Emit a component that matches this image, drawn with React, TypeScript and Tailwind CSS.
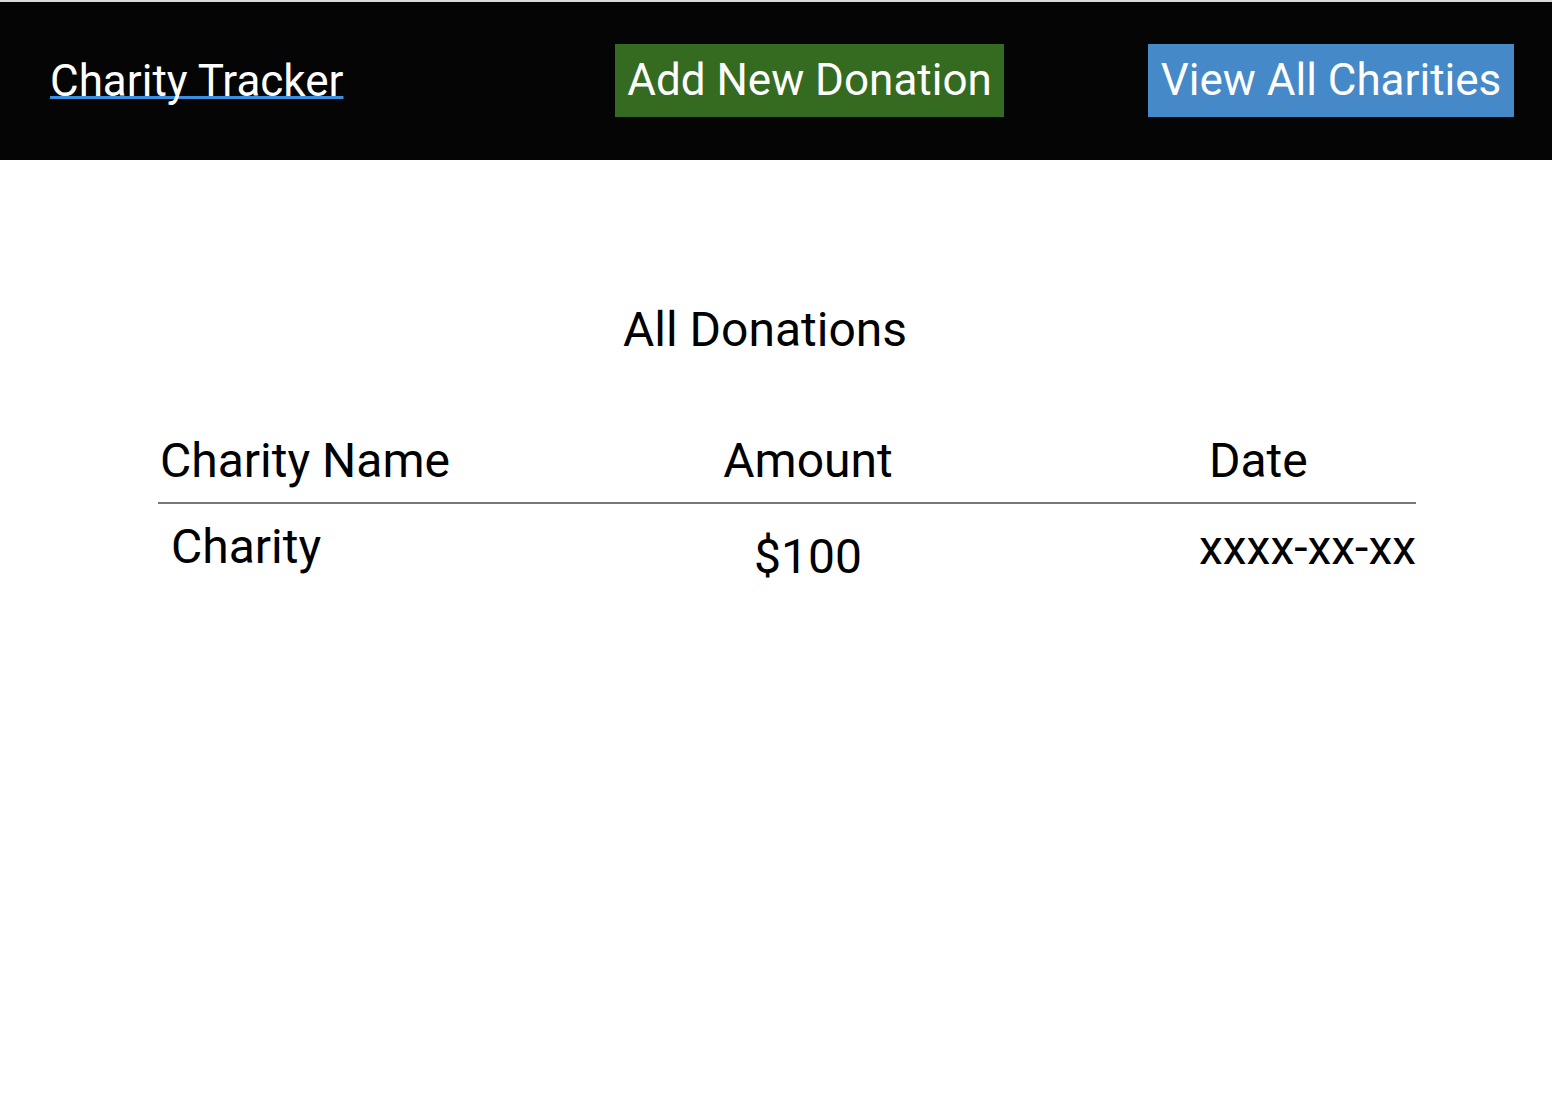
import React from "react";

export default function App() {
  return (
    <div className="min-h-[1110px] w-[1552px] bg-white font-['Roboto',sans-serif] text-black">
      <header className="flex h-[160px] items-center border-t-2 border-[#dadada] bg-[#050505] pl-[50px]">
        <div className="w-[565px]">
          <a
            href="#"
            className="text-[44px] leading-[50px] text-white underline decoration-[#3b8ee0] decoration-3 underline-offset-[0px] [text-decoration-skip-ink:none]"
          >
            Charity Tracker
          </a>
        </div>
        <button className="mb-[2px] flex h-[73px] w-[389px] items-center justify-center bg-[#356a21] text-[44px] leading-[50px] text-white">
          Add New Donation
        </button>
        <button className="mb-[2px] ml-[144px] flex h-[73px] w-[366px] items-center justify-center bg-[#4589c8] text-[44px] leading-[50px] text-white">
          View All Charities
        </button>
      </header>

      <main className="pl-[158px]">
        <h1 className="mt-[142px] w-[1214px] text-center text-[48px] leading-[56px]">All Donations</h1>

        <div className="mt-[75px] w-[1258px]">
          <div className="grid grid-cols-[450px_400px_408px] border-b-2 border-[#777777] pb-[13px] text-[48px] leading-[56px]">
            <div className="pl-[2px]">Charity Name</div>
            <div className="text-center">Amount</div>
            <div className="pl-[201px]">Date</div>
          </div>
          <div className="grid grid-cols-[450px_400px_408px] items-start text-[48px] leading-[56px]">
            <div className="mt-[15px] pl-[13px]">Charity</div>
            <div className="mt-[25px] text-center">$100</div>
            <div className="mt-[16px] text-right">xxxx-xx-xx</div>
          </div>
        </div>
      </main>
    </div>
  );
}
